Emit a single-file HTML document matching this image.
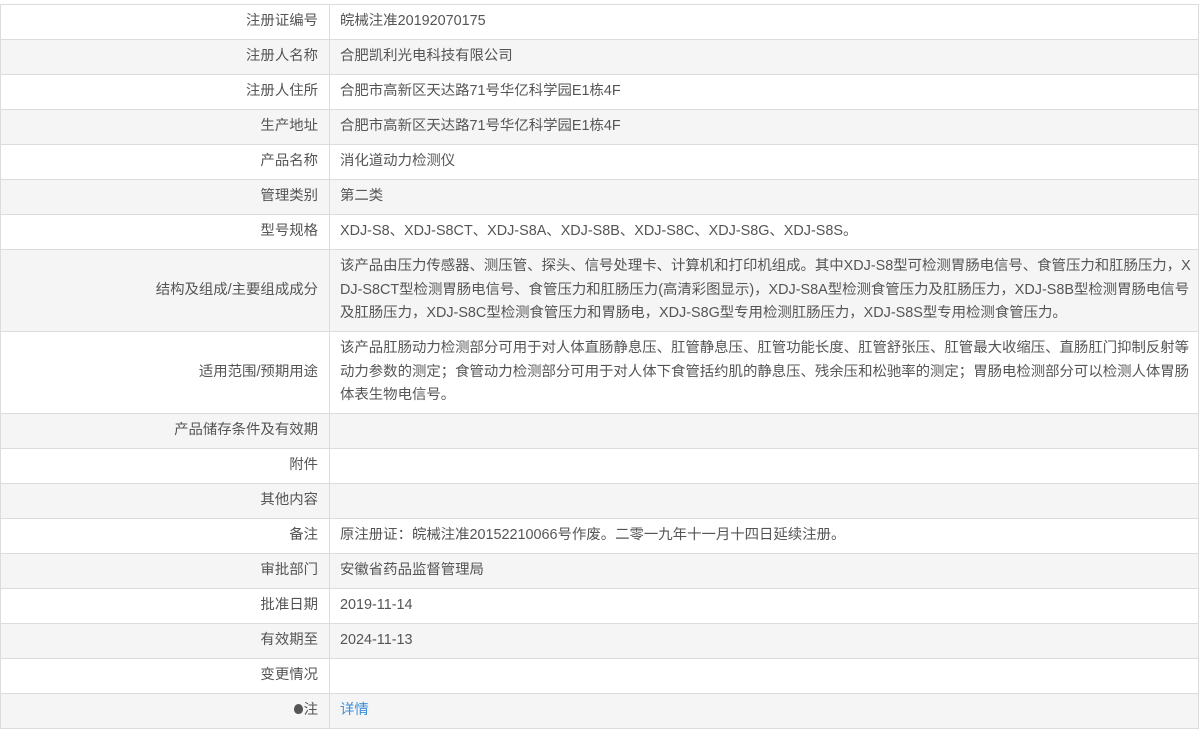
<!DOCTYPE html>
<html><head><meta charset="utf-8"><style>
html,body{margin:0;padding:0;background:#fff;}
body{width:1200px;height:733px;overflow:hidden;font-family:"Liberation Sans","Noto Sans CJK SC",sans-serif;font-size:14.4px;color:#555;}
table{position:absolute;left:0px;top:4px;width:1198px;border-collapse:collapse;table-layout:fixed;}
td{border:1px solid #dcdcdc;height:34px;padding:0;vertical-align:middle;white-space:nowrap;line-height:23.5px;overflow:hidden;}
td.l{text-align:right;padding-right:11px;color:#555;}
td.v{padding-left:10px;}
tr:nth-child(even) td{background:#f5f5f5;}
tr.t td{height:81px;}
a{color:#3d8fd8;text-decoration:none;}
.bulb{display:inline-block;width:9px;height:10px;background:#555;border-radius:50% 50% 45% 45%;margin-right:1px;}
</style></head><body>
<table>
<colgroup><col style="width:329px"><col style="width:869px"></colgroup>
<tr><td class="l">注册证编号</td><td class="v">皖械注准20192070175</td></tr>
<tr><td class="l">注册人名称</td><td class="v">合肥凯利光电科技有限公司</td></tr>
<tr><td class="l">注册人住所</td><td class="v">合肥市高新区天达路71号华亿科学园E1栋4F</td></tr>
<tr><td class="l">生产地址</td><td class="v">合肥市高新区天达路71号华亿科学园E1栋4F</td></tr>
<tr><td class="l">产品名称</td><td class="v">消化道动力检测仪</td></tr>
<tr><td class="l">管理类别</td><td class="v">第二类</td></tr>
<tr><td class="l">型号规格</td><td class="v">XDJ-S8、XDJ-S8CT、XDJ-S8A、XDJ-S8B、XDJ-S8C、XDJ-S8G、XDJ-S8S。</td></tr>
<tr class="t"><td class="l">结构及组成/主要组成成分</td><td class="v">该产品由压力传感器、测压管、探头、信号处理卡、计算机和打印机组成。其中XDJ-S8型可检测胃肠电信号、食管压力和肛肠压力，X<br>DJ-S8CT型检测胃肠电信号、食管压力和肛肠压力(高清彩图显示)，XDJ-S8A型检测食管压力及肛肠压力，XDJ-S8B型检测胃肠电信号<br>及肛肠压力，XDJ-S8C型检测食管压力和胃肠电，XDJ-S8G型专用检测肛肠压力，XDJ-S8S型专用检测食管压力。</td></tr>
<tr class="t"><td class="l">适用范围/预期用途</td><td class="v">该产品肛肠动力检测部分可用于对人体直肠静息压、肛管静息压、肛管功能长度、肛管舒张压、肛管最大收缩压、直肠肛门抑制反射等<br>动力参数的测定；食管动力检测部分可用于对人体下食管括约肌的静息压、残余压和松驰率的测定；胃肠电检测部分可以检测人体胃肠<br>体表生物电信号。</td></tr>
<tr><td class="l">产品储存条件及有效期</td><td class="v"></td></tr>
<tr><td class="l">附件</td><td class="v"></td></tr>
<tr><td class="l">其他内容</td><td class="v"></td></tr>
<tr><td class="l">备注</td><td class="v">原注册证：皖械注准20152210066号作废。二零一九年十一月十四日延续注册。</td></tr>
<tr><td class="l">审批部门</td><td class="v">安徽省药品监督管理局</td></tr>
<tr><td class="l">批准日期</td><td class="v">2019-11-14</td></tr>
<tr><td class="l">有效期至</td><td class="v">2024-11-13</td></tr>
<tr><td class="l">变更情况</td><td class="v"></td></tr>
<tr><td class="l"><span class="bulb"></span>注</td><td class="v"><a>详情</a></td></tr>
</table>
</body></html>
